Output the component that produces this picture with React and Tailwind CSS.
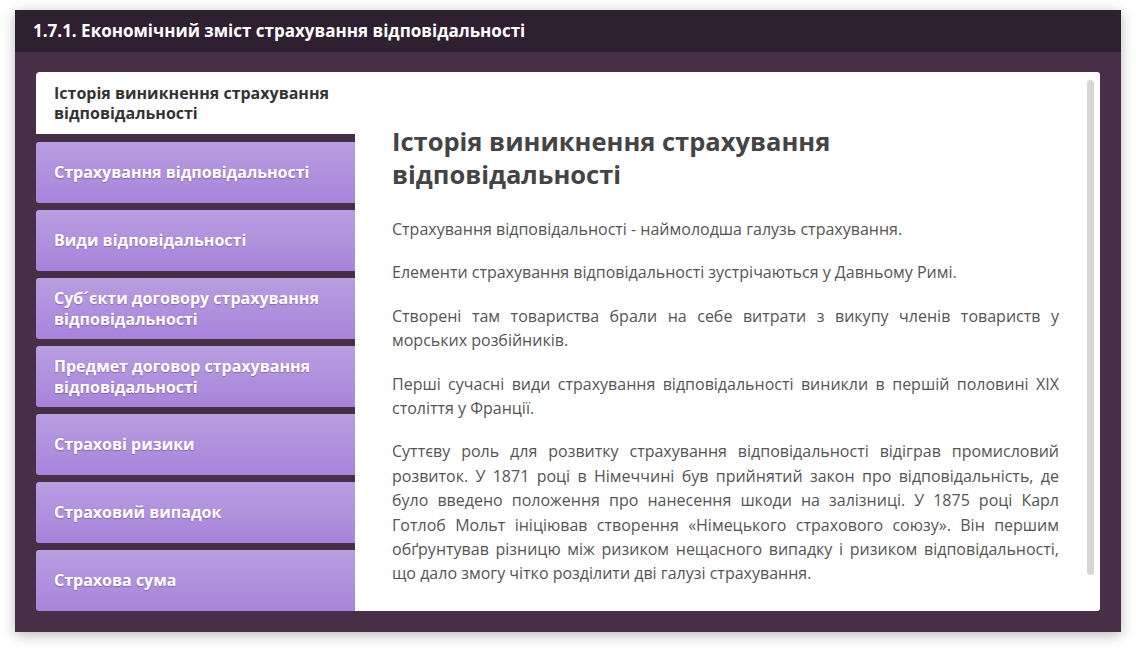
import React from 'react';

const tabs = [
  'Страхування відповідальності',
  'Види відповідальності',
  'Суб´єкти договору страхування відповідальності',
  'Предмет договор страхування відповідальності',
  'Страхові ризики',
  'Страховий випадок',
  'Страхова сума',
];

const paragraphs = [
  'Страхування відповідальності - наймолодша галузь страхування.',
  'Елементи страхування відповідальності зустрічаються у Давньому Римі.',
  'Створені там товариства брали на себе витрати з викупу членів товариств у морських розбійників.',
  'Перші сучасні види страхування відповідальності виникли в першій половині XIX століття у Франції.',
  'Суттєву роль для розвитку страхування відповідальності відіграв промисловий розвиток. У 1871 році в Німеччині був прийнятий закон про відповідальність, де було введено положення про нанесення шкоди на залізниці. У 1875 році Карл Готлоб Мольт ініціював створення «Німецького страхового союзу». Він першим обґрунтував різницю між ризиком нещасного випадку і ризиком відповідальності, що дало змогу чітко розділити дві галузі страхування.',
];

const App = () => {
  return (
    <div className="min-h-screen bg-white pt-[10px] pl-[15px] font-['Open_Sans',sans-serif]">
      <div className="w-[1106px] h-[622px] bg-[#472f48] flex flex-col shadow-[0_3px_12px_rgba(0,0,0,0.28)]">
        <div className="h-[42px] shrink-0 bg-[#2e2031] px-[18px] flex items-center text-white font-bold text-[17px]">
          1.7.1. Економічний зміст страхування відповідальності
        </div>

        <div className="flex-1 pt-[20px] px-[21px] pb-[21px] min-h-0">
          <div className="flex h-full">
            <div className="w-[319px] shrink-0 flex flex-col gap-[7px]">
              <div className="h-[62px] mb-[1px] shrink-0 bg-white rounded-tl-[4px] px-[18px] flex items-center text-[#333] font-bold text-[16px] leading-[20px]">
                Історія виникнення страхування відповідальності
              </div>
              {tabs.map((t) => (
                <div
                  key={t}
                  className="h-[61px] shrink-0 rounded-l-[3px] bg-gradient-to-b from-[#b89ee1] to-[#a784da] px-[18px] flex items-center text-white font-bold text-[16px] leading-[21px] [text-shadow:0_1px_1px_rgba(60,30,90,0.35)]"
                >
                  {t}
                </div>
              ))}
            </div>

            <div className="flex-1 bg-white rounded-r-[3px] flex">
              <div className="flex-1 pl-[37px] pr-[28px] pt-[53px]">
                <h1 className="text-[25.5px] leading-[33px] font-bold text-[#444] mb-[26px]">
                  Історія виникнення страхування відповідальності
                </h1>
                {paragraphs.map((p, i) => (
                  <p key={i} className="text-[16px] leading-[24.4px] text-[#555] text-justify mb-[19px]">
                    {p}
                  </p>
                ))}
              </div>
              <div className="w-[13px] shrink-0 pt-[8px] pb-[36px]">
                <div className="w-[7px] h-full bg-[#d6d6d6] rounded-full" />
              </div>
            </div>
          </div>
        </div>
      </div>
    </div>
  );
};

export default App;
